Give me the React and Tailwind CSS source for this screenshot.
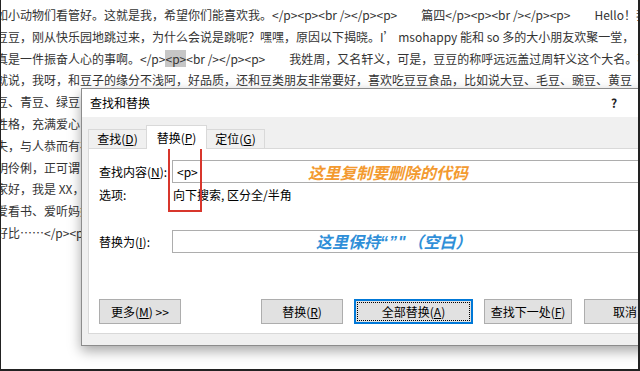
import React from "react";

const rows = [
  "如小动物们看管好。这就是我，希望你们能喜欢我。</p><p><br /></p><p>　　篇四</p><p><br /></p><p>　　Hello！我是豆豆",
  "豆豆，刚从快乐园地跳过来，为什么会说是跳呢？嘿嘿，原因以下揭晓。I’ msohappy 能和 so 多的大小朋友欢聚一堂，",
  null,
  "就说，我呀，和豆子的缘分不浅阿，好品质，还和豆类朋友非常要好，喜欢吃豆豆食品，比如说大豆、毛豆、豌豆、黄豆",
  "豆、青豆、绿豆，都是我的好朋友。",
  "性格，充满爱心，乐于助人。",
  "失，与人恭而有礼。",
  "明伶俐，正可谓，人见人爱。",
  "家好，我是 XX，今年八岁。",
  "爱看书、爱听妈妈讲故事。",
  "好比……</p><p>",
];

function Btn({ children, className = "" }) {
  return (
    <div
      className={
        "h-[25px] flex items-center justify-center bg-[#e1e1e1] border border-[#adadad] text-[12px] text-black " +
        className
      }
    >
      {children}
    </div>
  );
}

export default function App() {
  return (
    <div className="relative w-[640px] h-[371px] overflow-hidden bg-white border-l border-r-2 border-b-2 border-[#222] font-['Noto_Sans_CJK_SC',sans-serif]">
      {/* document text */}
      <div className="pt-[4px] ml-[-5px] text-[12px] leading-[21.8px] text-[#333] whitespace-nowrap">
        {rows.map((r, i) =>
          r === null ? (
            <div key={i}>
              真是一件振奋人心的事啊。&lt;/p&gt;
              <span className="bg-[#c6c6c6]">&lt;p&gt;</span>
              &lt;br /&gt;&lt;/p&gt;&lt;p&gt;　　我姓周，又名轩义，可是，豆豆的称呼远远盖过周轩义这个大名。不过
            </div>
          ) : (
            <div key={i}>{r}</div>
          )
        )}
      </div>

      {/* dialog */}
      <div className="absolute left-[80px] top-[88px] w-[600px] h-[258px] border border-[#8c8c8c] bg-[#f0f0f0] shadow-[0_5px_12px_rgba(0,0,0,0.35)] flex flex-col text-[12px] text-black">
        <div className="h-[28px] bg-white flex items-center pl-[8px] shrink-0">
          <span className="w-[521px]">查找和替换</span>
          <span className="font-bold text-[#222]">?</span>
        </div>
        <div className="flex flex-col pl-[6px] pt-[8px]">
          <div className="flex items-end h-[23px]">
            <div className="w-[58px] h-[19px] flex items-center justify-center border-t border-l border-[#d9d9d9] bg-[#f0f0f0]">
              查找(<span className="underline">D</span>)
            </div>
            <div className="relative z-10 w-[61px] h-[24px] mb-[-1px] flex items-center justify-center border-t border-l border-r border-[#d9d9d9] bg-white">
              替换(<span className="underline">P</span>)
            </div>
            <div className="w-[58px] h-[19px] flex items-center justify-center border-t border-r border-[#d9d9d9] bg-[#f0f0f0]">
              定位(<span className="underline">G</span>)
            </div>
          </div>
          <div className="h-[186px] bg-white border border-[#d9d9d9] pl-[10px] flex flex-col">
            <div className="flex items-center mt-[11px]">
              <span className="w-[73px]">
                查找内容(<span className="underline">N</span>):
              </span>
              <div className="w-[480px] h-[23px] border border-[#adadad] flex items-center pl-[4px]">
                &lt;p&gt;
              </div>
            </div>
            <div className="flex items-center mt-[4px] h-[16px]">
              <span className="w-[74px]">选项:</span>
              <span>向下搜索, 区分全/半角</span>
            </div>
            <div className="flex items-center mt-[27px]">
              <span className="w-[73px]">
                替换为(<span className="underline">I</span>):
              </span>
              <div className="w-[480px] h-[23px] border border-[#adadad]"></div>
            </div>
            <div className="flex items-center mt-[46px]">
              <Btn className="w-[82px]">
                更多(<span className="underline">M</span>) &gt;&gt;
              </Btn>
              <Btn className="w-[82px] ml-[80px]">
                替换(<span className="underline">R</span>)
              </Btn>
              <div className="relative w-[119px] h-[25px] ml-[11px] flex items-center justify-center bg-[#e1e1e1] border-2 border-[#0078d7]">
                <span className="absolute inset-[1px] border border-dotted border-black"></span>
                全部替换(<span className="underline">A</span>)
              </div>
              <Btn className="w-[88px] ml-[11px]">
                查找下一处(<span className="underline">F</span>)
              </Btn>
              <Btn className="w-[82px] ml-[12px]">取消</Btn>
            </div>
          </div>
        </div>
      </div>

      {/* annotations */}
      <div className="absolute left-[167px] top-[146px] w-[34px] h-[66px] border-2 border-[#d8362c]"></div>
      <div className="absolute left-[307px] top-[161px] text-[16px] leading-[22px] font-bold italic text-[#f39a30] whitespace-nowrap">
        这里复制要删除的代码
      </div>
      <div className="absolute left-[315px] top-[230px] text-[16px] leading-[22px] font-bold italic text-[#2f8fd8] whitespace-nowrap">
        这里保持
        <span className="font-['Liberation_Sans',sans-serif] tracking-[1px] mr-[1px]">“”"</span>
        （空白）
      </div>
    </div>
  );
}
